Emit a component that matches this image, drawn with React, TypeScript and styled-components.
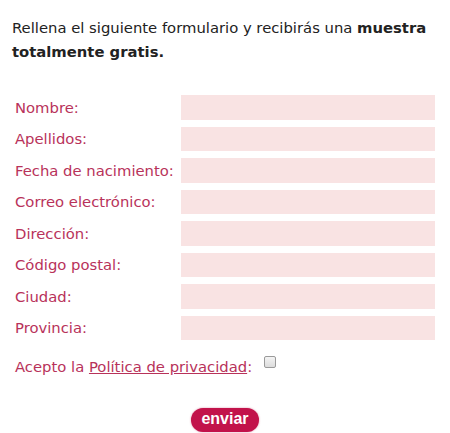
import React from 'react';
import styled, { createGlobalStyle } from 'styled-components';

const GlobalStyle = createGlobalStyle`
  html, body {
    margin: 0;
    background: #ffffff;
  }
  body {
    font-family: "DejaVu Sans", Verdana, sans-serif;
  }
`;

const fields = [
  'Nombre:',
  'Apellidos:',
  'Fecha de nacimiento:',
  'Correo electrónico:',
  'Dirección:',
  'Código postal:',
  'Ciudad:',
  'Provincia:',
];

const Page = styled.div`
  width: 450px;
  height: 433px;
  padding: 16px 12px 0;
  box-sizing: border-box;
  overflow: hidden;
`;

const Intro = styled.p`
  margin: 0;
  font-size: 14.8px;
  line-height: 24px;
  color: #222;

  b {
    font-weight: bold;
  }
`;

const Form = styled.form`
  margin-top: 31px;
  padding-left: 3px;
  display: grid;
  grid-template-columns: 166px 254px;
  row-gap: 7px;
  align-items: center;
`;

const Label = styled.label`
  font-size: 14.8px;
  color: #b8325a;
  white-space: nowrap;
`;

const Field = styled.div`
  height: 24.5px;
  background: #f9e3e3;
`;

const Consent = styled.div`
  margin-top: 18px;
  padding-left: 3px;
  display: flex;
  align-items: center;
  font-size: 14.8px;
  color: #b8325a;
`;

const Link = styled.span`
  text-decoration: underline;
`;

const Box = styled.span`
  display: inline-block;
  width: 10px;
  height: 10px;
  margin-left: 12px;
  margin-top: -10px;
  border: 1px solid #9a9a9a;
  border-radius: 2px;
  background: linear-gradient(#f4f4f4, #dcdcdc);
`;

const Actions = styled.div`
  display: flex;
  justify-content: center;
  margin-top: 33px;
`;

const Send = styled.button`
  width: 68px;
  height: 24px;
  padding: 0 0 2px;
  border: none;
  border-radius: 12px;
  background: #c2134b;
  box-shadow: 0 0 2px rgba(194, 19, 75, 0.5);
  color: #fff;
  font-family: "Liberation Sans", Arial, sans-serif;
  font-weight: bold;
  font-size: 16px;
`;

export default function App() {
  return (
    <>
      <GlobalStyle />
      <Page>
        <Intro>
          Rellena el siguiente formulario y recibirás una <b>muestra totalmente gratis.</b>
        </Intro>
        <Form>
          {fields.map((f) => (
            <React.Fragment key={f}>
              <Label>{f}</Label>
              <Field />
            </React.Fragment>
          ))}
        </Form>
        <Consent>
          Acepto la&nbsp;<Link>Política de privacidad</Link>:
          <Box />
        </Consent>
        <Actions>
          <Send type="button">enviar</Send>
        </Actions>
      </Page>
    </>
  );
}
